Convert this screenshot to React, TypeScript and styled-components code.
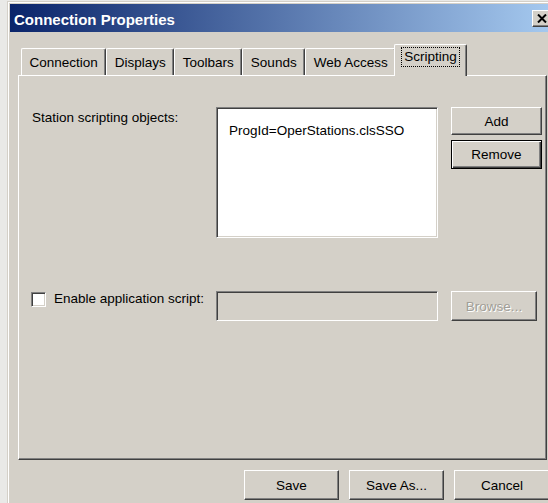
import React from "react";
import styled, { createGlobalStyle, css } from "styled-components";

const FACE = "#d4d0c8";
const SHADOW = "#808080";
const DARK = "#404040";

const GlobalStyle = createGlobalStyle`
  html, body { margin: 0; padding: 0; }
  body {
    background: #e9e9e7;
    width: 548px;
    height: 503px;
    overflow: hidden;
  }
`;

const raised = css`
  border: 1px solid;
  border-color: #fff ${DARK} ${DARK} #fff;
  box-shadow: inset -1px -1px ${SHADOW}, inset 1px 1px ${FACE};
`;

const sunken = css`
  border: 1px solid;
  border-color: ${SHADOW} #fff #fff ${SHADOW};
  box-shadow: inset 1px 1px ${DARK}, inset -1px -1px ${FACE};
`;

const Window = styled.div`
  margin: 1px 0 0 7px;
  width: 550px;
  height: 505px;
  box-sizing: border-box;
  background: ${FACE};
  border: 1px solid;
  border-color: ${FACE} ${DARK} ${DARK} ${FACE};
  box-shadow: inset 1px 1px #fff, inset -1px -1px ${SHADOW};
  padding: 2px;
  display: flex;
  flex-direction: column;
  font-family: "Liberation Sans", Arial, sans-serif;
  font-size: 13.5px;
  color: #000;
`;

const TitleBar = styled.div`
  height: 28px;
  flex: 0 0 auto;
  display: flex;
  align-items: center;
  padding: 0 2px 0 4px;
  background: linear-gradient(to right, #0a246a, #a6caf0);
`;

const Title = styled.span`
  color: #fff;
  font-weight: bold;
  font-size: 15px;
  padding-top: 3px;
`;

const CloseButton = styled.button`
  ${raised};
  margin-left: auto;
  margin-top: 1px;
  width: 20px;
  height: 17px;
  padding: 0;
  background: ${FACE};
  display: flex;
  align-items: center;
  justify-content: center;
`;

const Body = styled.div`
  padding: 12px 7px 0 8px;
  display: flex;
  flex-direction: column;
`;

const TabStrip = styled.div`
  height: 31px;
  display: flex;
  align-items: flex-end;
  padding-left: 3px;
`;

const Tab = styled.div<{ $active?: boolean }>`
  box-sizing: border-box;
  height: ${(p) => (p.$active ? 32 : 27)}px;
  margin: ${(p) => (p.$active ? "0 -2px -1px -2px" : "0")};
  padding: ${(p) => (p.$active ? "4px 8px 0" : "0 7.5px")};
  display: flex;
  align-items: ${(p) => (p.$active ? "flex-start" : "center")};
  background: ${FACE};
  border-top: 1px solid #fff;
  border-left: 1px solid #fff;
  border-right: 1px solid ${DARK};
  border-radius: 2px 2px 0 0;
  box-shadow: inset -1px 0 ${SHADOW};
  white-space: nowrap;
  position: relative;
  z-index: ${(p) => (p.$active ? 1 : 0)};
`;

const FocusLabel = styled.span`
  outline: 1px dotted #000;
  outline-offset: 1px;
  padding: 0 1px 1px;
`;

const Panel = styled.div`
  height: 385px;
  box-sizing: border-box;
  background: ${FACE};
  border: 1px solid;
  border-color: #fff ${DARK} ${DARK} #fff;
  box-shadow: inset -1px -1px ${SHADOW};
  padding: 31px 0 0 13px;
  display: grid;
  grid-template-columns: 171px 222px 91px;
  grid-template-rows: auto auto;
  column-gap: 13px;
  row-gap: 53px;
  align-content: start;
`;

const FieldLabel = styled.div`
  padding-top: 3px;
  white-space: nowrap;
`;

const ListBox = styled.div`
  ${sunken};
  height: 131px;
  box-sizing: border-box;
  background: #fff;
  padding: 15px 0 0 12px;
`;

const ButtonStack = styled.div`
  display: flex;
  flex-direction: column;
  gap: 5px;
`;

const Button = styled.button<{ $h?: number; $w?: number; $default?: boolean }>`
  ${raised};
  box-sizing: border-box;
  height: ${(p) => p.$h ?? 28}px;
  width: ${(p) => (p.$w ? `${p.$w}px` : "100%")};
  background: ${FACE};
  font-family: inherit;
  font-size: 13.5px;
  color: #000;
  padding: 0;
  ${(p) =>
    p.$default &&
    css`
      border: 1px solid #000;
      box-shadow: inset 1px 1px #fff, inset -1px -1px ${DARK}, inset -2px -2px ${SHADOW};
    `}
  &:disabled {
    color: #a19e97;
    text-shadow: 1px 1px #fff;
  }
`;

const CheckRow = styled.label`
  display: flex;
  align-items: flex-start;
  margin-left: -1px;
  white-space: nowrap;
`;

const CheckBox = styled.span`
  ${sunken};
  box-sizing: border-box;
  width: 15px;
  height: 15px;
  background: #fff;
  margin: 1px 8px 0 0;
  flex: 0 0 auto;
`;

const TextField = styled.div`
  ${sunken};
  box-sizing: border-box;
  height: 30px;
  background: ${FACE};
`;

const ButtonRow = styled.div`
  display: flex;
  justify-content: flex-end;
  gap: 10px;
  margin: 10px -3px 0 0;
`;

export default function App() {
  return (
    <>
      <GlobalStyle />
      <Window>
        <TitleBar>
          <Title>Connection Properties</Title>
          <CloseButton aria-label="Close">
            <svg width="10" height="9" viewBox="0 0 10 9">
              <path d="M1 0.5 L9 8.5 M9 0.5 L1 8.5" stroke="#000" strokeWidth="2" />
            </svg>
          </CloseButton>
        </TitleBar>
        <Body>
          <TabStrip>
            <Tab>Connection</Tab>
            <Tab>Displays</Tab>
            <Tab>Toolbars</Tab>
            <Tab>Sounds</Tab>
            <Tab>Web Access</Tab>
            <Tab $active>
              <FocusLabel>Scripting</FocusLabel>
            </Tab>
          </TabStrip>
          <Panel>
            <FieldLabel>Station scripting objects:</FieldLabel>
            <ListBox>ProgId=OperStations.clsSSO</ListBox>
            <ButtonStack>
              <Button $h={28}>Add</Button>
              <Button $h={29} $default>
                Remove
              </Button>
            </ButtonStack>

            <CheckRow>
              <CheckBox />
              Enable application script:
            </CheckRow>
            <TextField />
            <div>
              <Button $h={30} $w={86} disabled>
                Browse...
              </Button>
            </div>
          </Panel>
          <ButtonRow>
            <Button $h={30} $w={95}>
              Save
            </Button>
            <Button $h={30} $w={95}>
              Save As...
            </Button>
            <Button $h={30} $w={96}>
              Cancel
            </Button>
          </ButtonRow>
        </Body>
      </Window>
    </>
  );
}
